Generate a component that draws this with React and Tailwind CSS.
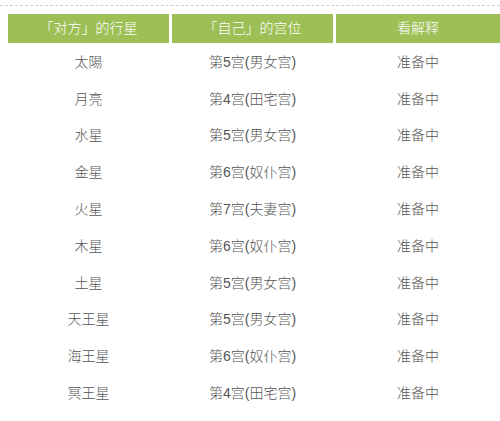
export default function App() {
  const rows = [
    ["太陽", "第5宫(男女宫)"],
    ["月亮", "第4宫(田宅宫)"],
    ["水星", "第5宫(男女宫)"],
    ["金星", "第6宫(奴仆宫)"],
    ["火星", "第7宫(夫妻宫)"],
    ["木星", "第6宫(奴仆宫)"],
    ["土星", "第5宫(男女宫)"],
    ["天王星", "第5宫(男女宫)"],
    ["海王星", "第6宫(奴仆宫)"],
    ["冥王星", "第4宫(田宅宫)"],
  ];
  const font = { fontFamily: '"Liberation Sans", "Noto Sans CJK SC", sans-serif' };
  return (
    <div className="w-[500px] h-[421px] bg-white overflow-hidden font-light" style={font}>
      <div className="pt-[5px] border-b border-dashed border-[#cfcfcf] h-[6px]"></div>
      <div className="pl-[8px] pt-[8px]">
        <div className="grid grid-cols-[161px_161px_1fr] gap-x-[3px] h-[29px] text-white text-[14px]">
          <div className="bg-[#9ebf56] flex items-center justify-center">「对方」的行星</div>
          <div className="bg-[#9ebf56] flex items-center justify-center">「自己」的宫位</div>
          <div className="bg-[#9ebf56] flex items-center justify-center">看解释</div>
        </div>
        <div className="flex flex-col pt-[1px]">
          {rows.map((r, i) => (
            <div key={i} className="grid grid-cols-[161px_161px_1fr] gap-x-[3px] h-[36.8px] items-center text-[14px] text-[#555]">
              <div className="text-center">{r[0]}</div>
              <div className="text-center">{r[1]}</div>
              <div className="text-center">准备中</div>
            </div>
          ))}
        </div>
      </div>
    </div>
  );
}
